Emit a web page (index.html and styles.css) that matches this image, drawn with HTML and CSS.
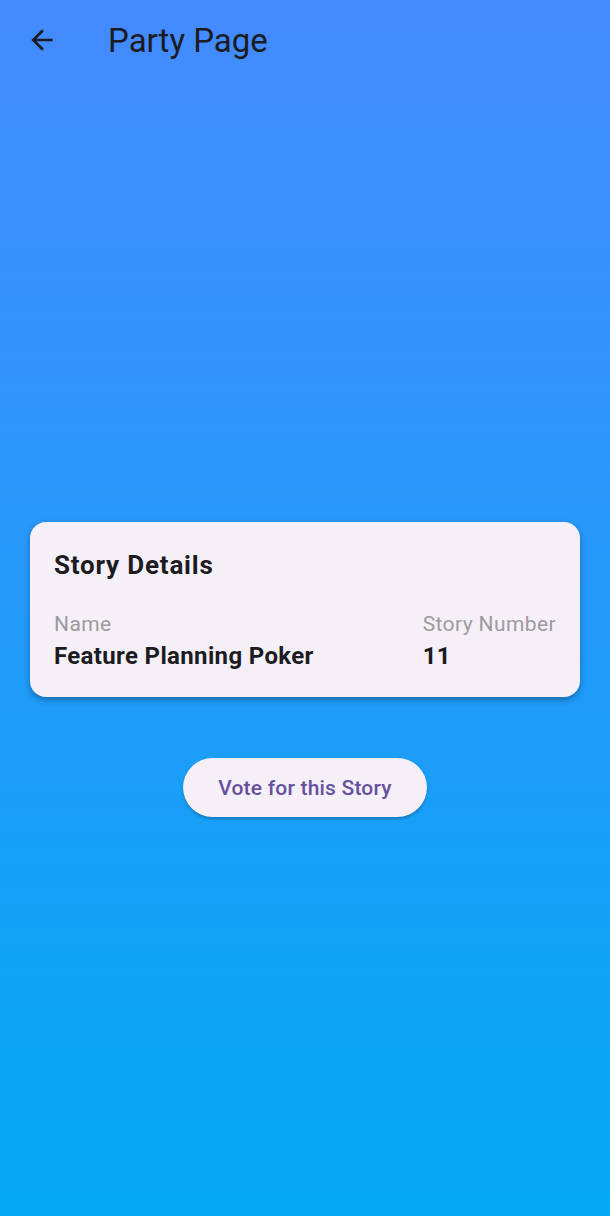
FILE: index.html
```html
<!DOCTYPE html>
<html>
<head>
<meta charset="utf-8">
<link rel="stylesheet" href="styles.css">
</head>
<body>
<div class="page">
  <header class="appbar">
    <button class="back" aria-label="Back">
      <svg width="24" height="24" viewBox="0 0 24 24"><path d="M20 11H7.83l5.59-5.59L12 4l-8 8 8 8 1.41-1.41L7.83 13H20v-2z" fill="#1c1b1f"/></svg>
    </button>
    <h1 class="title">Party Page</h1>
  </header>
  <main class="content">
    <section class="card">
      <h2 class="card-title">Story Details</h2>
      <div class="row">
        <div class="field">
          <div class="label">Name</div>
          <div class="value">Feature Planning Poker</div>
        </div>
        <div class="field">
          <div class="label">Story Number</div>
          <div class="value">11</div>
        </div>
      </div>
    </section>
    <button class="vote">Vote for this Story</button>
  </main>
</div>
</body>
</html>
```
FILE: styles.css
```css
html, body {
  margin: 0;
  padding: 0;
}
body {
  font-family: Roboto, "Noto Sans", sans-serif;
}
.page {
  width: 610px;
  height: 1216px;
  background: linear-gradient(180deg, #448AFF 0%, #03A9F4 100%);
  display: flex;
  flex-direction: column;
}
.appbar {
  height: 80px;
  display: flex;
  align-items: center;
  padding: 0 0 0 18px;
  box-sizing: border-box;
}
.back {
  width: 48px;
  height: 48px;
  border: none;
  background: none;
  padding: 0;
  display: flex;
  align-items: center;
  justify-content: center;
}
.back svg {
  width: 32px;
  height: 32px;
}
.title {
  margin: 0 0 0 42px;
  font-size: 33px;
  font-weight: 400;
  color: #1c1b1f;
}
.content {
  display: flex;
  flex-direction: column;
  align-items: center;
  padding: 442px 30px 0;
}
.card {
  align-self: stretch;
  background: #f5f0f7;
  border-radius: 16px;
  box-shadow: 0 3px 6px rgba(0,0,0,0.3);
  padding: 24px 24px 26px;
  color: #1c1b1f;
}
.card-title {
  margin: 0;
  font-size: 26px;
  letter-spacing: 0.8px;
  font-weight: 700;
  line-height: 38px;
}
.row {
  display: flex;
  justify-content: space-between;
  margin-top: 27px;
}
.label {
  font-size: 21px;
  letter-spacing: 0.4px;
  color: #9d9a9f;
  line-height: 26px;
}
.value {
  font-size: 24px;
  letter-spacing: 0.35px;
  font-weight: 700;
  line-height: 30px;
  margin-top: 4px;
}
.vote {
  margin-top: 61px;
  width: 244px;
  height: 59px;
  border: none;
  border-radius: 30px;
  background: #f5f0f7;
  color: #65509f;
  font-family: Roboto, sans-serif;
  font-size: 21px;
  letter-spacing: 0.2px;
  font-weight: 500;
  box-shadow: 0 2px 3px rgba(0,0,0,0.25);
}
```
